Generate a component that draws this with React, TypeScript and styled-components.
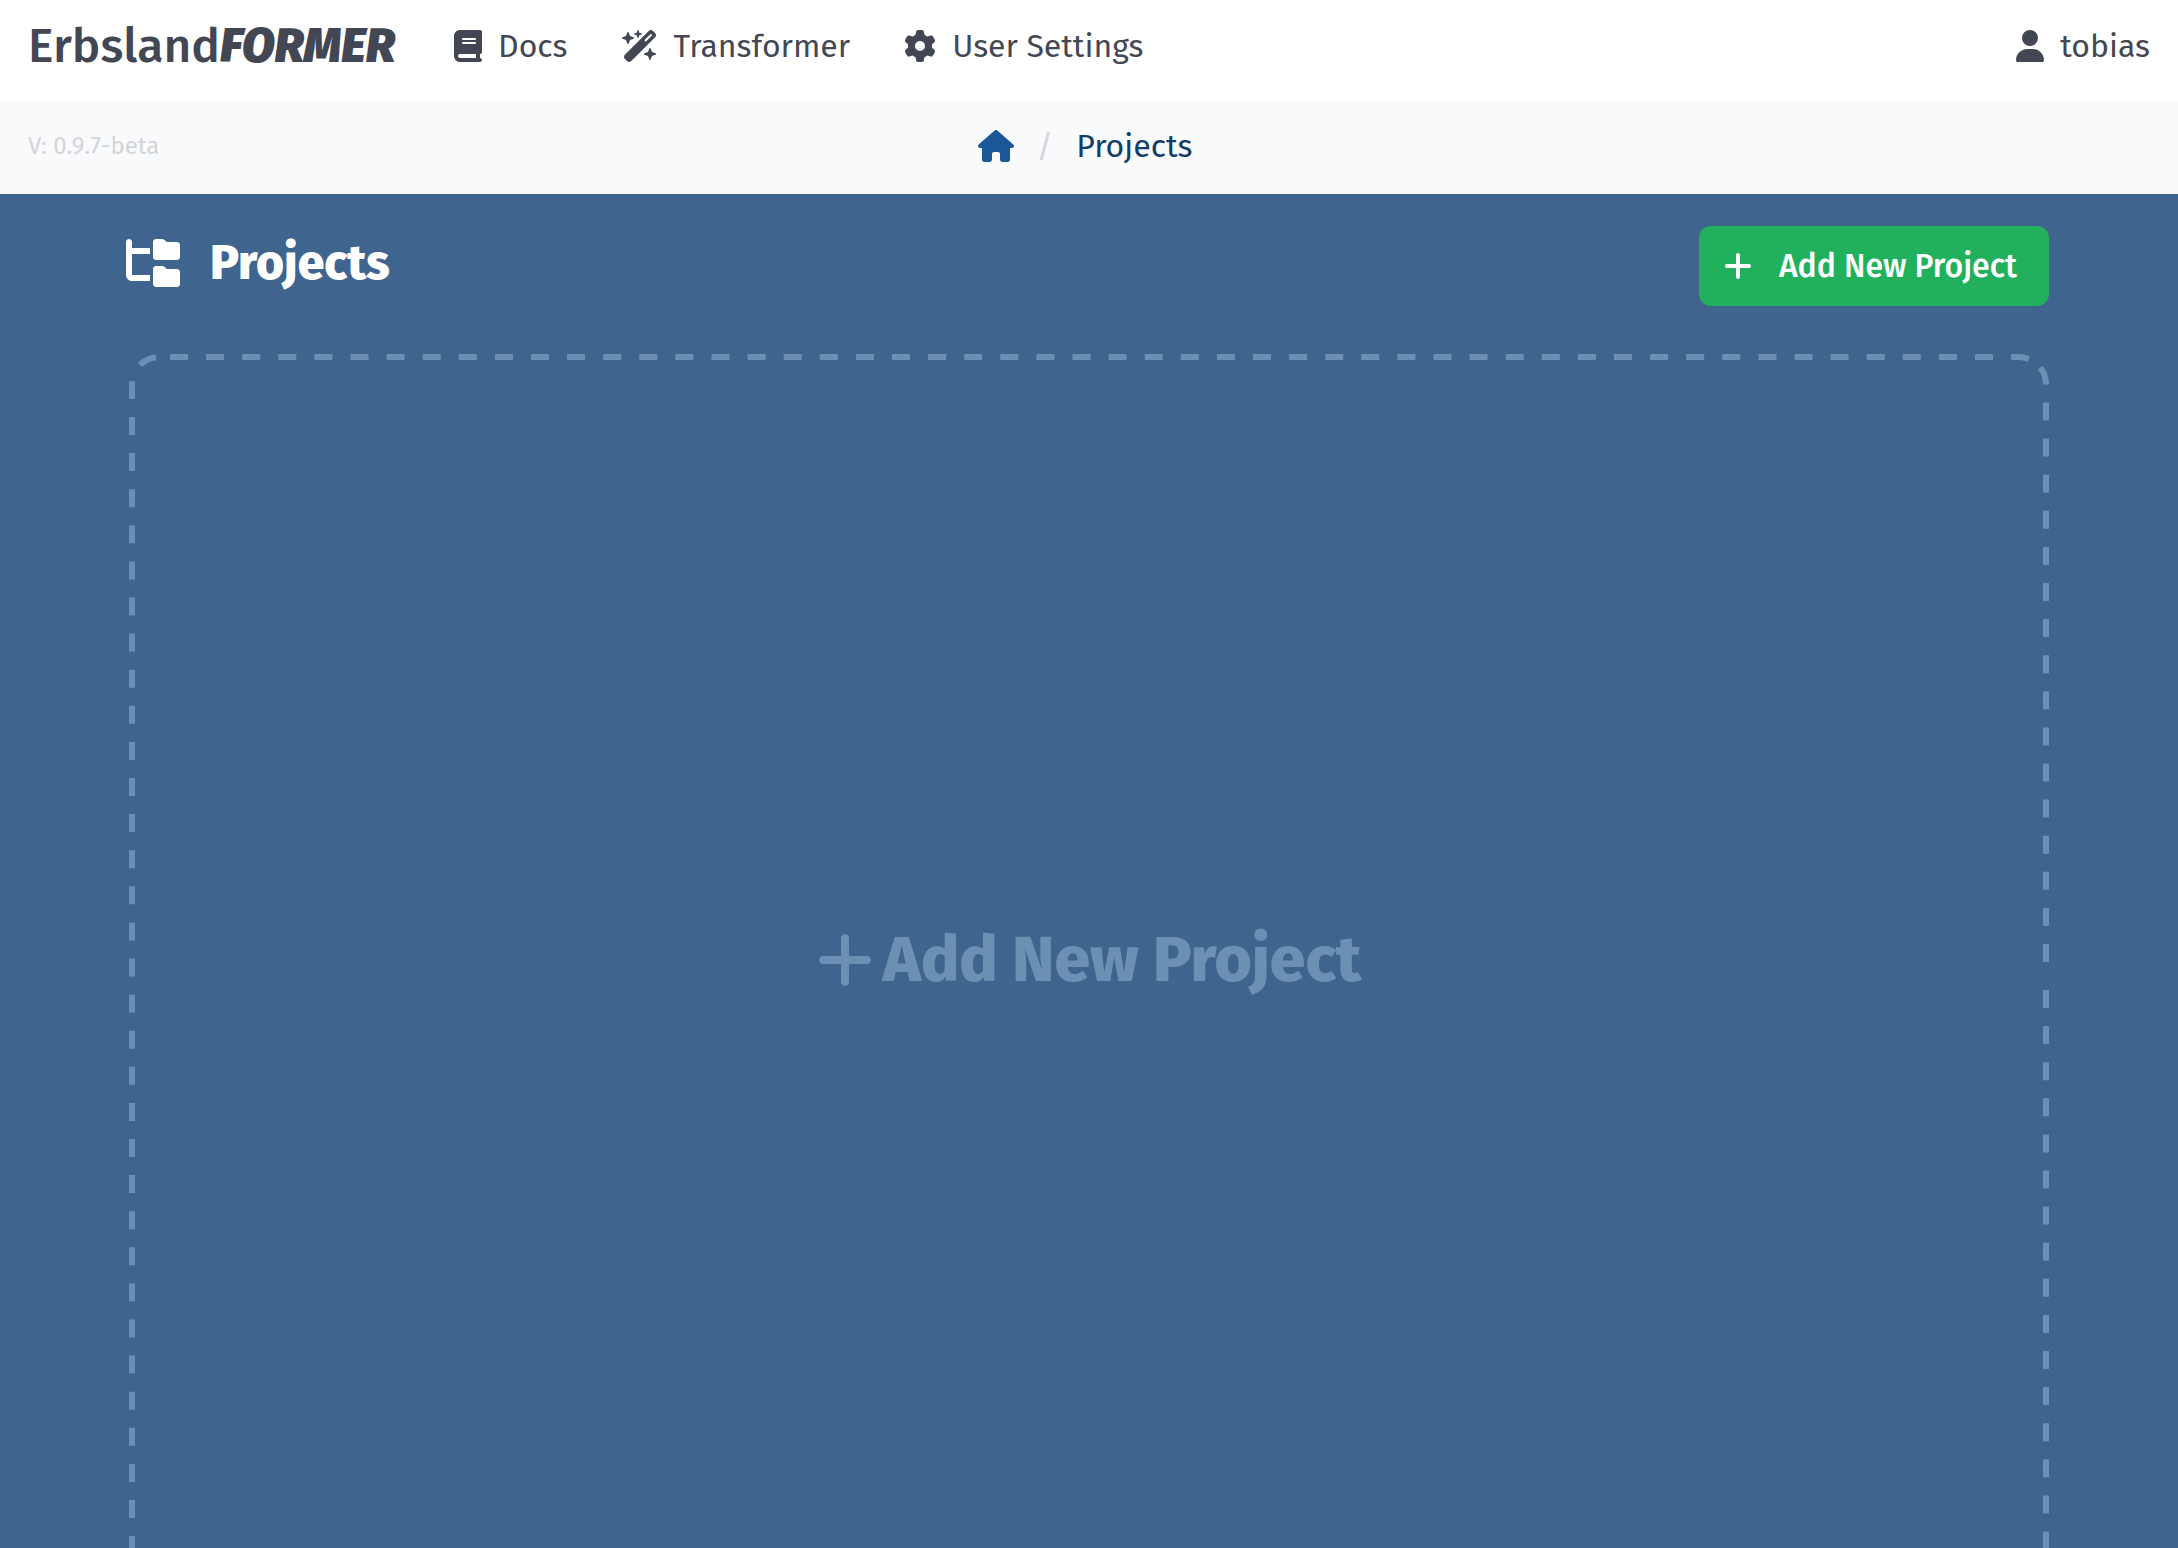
import React, { useLayoutEffect, useRef, useState } from "react";
import styled, { createGlobalStyle } from "styled-components";
import {
  FaBook,
  FaFolderTree,
  FaGear,
  FaHouse,
  FaPlus,
  FaUser,
  FaWandMagicSparkles,
} from "react-icons/fa6";

const ink = "#434753";
const blue = "#3f658f";
const faded = "#6b90b3";

const GlobalStyle = createGlobalStyle`
  *, *::before, *::after { box-sizing: border-box; }
  body {
    margin: 0;
    background: ${blue};
    color: ${ink};
    font-family: "Fira Sans", "Noto Sans", sans-serif;
    font-size: 32px;
    line-height: 40px;
  }
  a { color: inherit; text-decoration: none; }
`;

const Page = styled.div`
  display: flex;
  flex-direction: column;
  height: 100vh;
  overflow: hidden;
`;

const Glyph = styled.span<{ $width: number; $height?: number }>`
  flex: none;
  display: block;
  width: ${(p) => p.$width}px;
  height: ${(p) => p.$height ?? 32}px;

  svg {
    display: block;
    width: 100%;
    height: 100%;
  }
`;

const TopBar = styled.header`
  flex: none;
  display: flex;
  align-items: center;
  justify-content: space-between;
  height: 100px;
  padding: 0 28px 8px;
  background: #ffffff;
`;

const TopLeft = styled.div`
  display: flex;
  align-items: center;
  gap: 59px;
`;

const Logo = styled.a`
  font-size: 48px;
  font-weight: 500;
  line-height: 60px;
  white-space: nowrap;

  em {
    font-weight: 900;
  }
`;

const Nav = styled.nav`
  display: flex;
  gap: 54px;
`;

const NavLink = styled.a`
  display: flex;
  align-items: center;
  gap: 16px;
  white-space: nowrap;
`;

const SubBar = styled.div`
  flex: none;
  display: grid;
  grid-template-columns: 1fr auto 1fr;
  align-items: center;
  height: 94px;
  padding: 0 28px 2px;
  background: #f9fafc;
`;

const Version = styled.span`
  color: #d3d5d8;
  font-size: 24px;
`;

const Crumbs = styled.nav`
  display: flex;
  align-items: center;
  gap: 23px;
  padding-right: 8px;
  color: #123d68;

  ${Glyph} {
    color: #1a5796;
  }
`;

const Slash = styled.span`
  color: #d3d5d8;
`;

const Main = styled.main`
  flex: none;
  width: 100%;
  max-width: 1976px;
  margin: 0 auto;
  padding: 32px 28px;
`;

const TitleRow = styled.div`
  display: flex;
  align-items: center;
  justify-content: space-between;
  height: 80px;
  margin-bottom: 48px;
`;

const Title = styled.h1`
  display: flex;
  align-items: center;
  gap: 30px;
  margin: 0 0 6px -3px;
  color: #ffffff;
  font-size: 48px;
  font-weight: 800;
  line-height: 64px;
`;

const AddButton = styled.button`
  display: flex;
  align-items: center;
  gap: 27px;
  height: 80px;
  padding: 0 32px 0 25px;
  border: 0;
  border-radius: 12px;
  background: #21b15c;
  color: #ffffff;
  font: inherit;
  font-weight: 500;
  white-space: nowrap;
  cursor: pointer;
`;

const DropArea = styled.button`
  position: relative;
  display: flex;
  align-items: center;
  justify-content: center;
  gap: 10px;
  width: 100%;
  height: calc(100vh - 312px);
  padding: 0 0 24px;
  border: 0;
  background: transparent;
  color: ${faded};
  font: inherit;
  font-size: 64px;
  font-weight: 800;
  cursor: pointer;
`;

const Frame = styled.svg`
  position: absolute;
  inset: 0;
  width: 100%;
  height: 100%;
  fill: none;
  stroke: ${faded};
  stroke-width: 6;
  stroke-dasharray: 18 18.1;
`;

/* Rounded dashed outline: the dash pattern restarts at each side and at the middle of the right edge. */
function DashedFrame() {
  const ref = useRef<SVGSVGElement>(null);
  const [size, setSize] = useState({ w: 0, h: 0 });

  useLayoutEffect(() => {
    const el = ref.current;
    if (!el) return;
    const measure = () => {
      const box = el.getBoundingClientRect();
      setSize({ w: box.width, h: box.height });
    };
    measure();
    const observer = new ResizeObserver(measure);
    observer.observe(el);
    return () => observer.disconnect();
  }, []);

  const { w, h } = size;
  const mid = h / 2 - 12;

  return (
    <Frame ref={ref} aria-hidden="true">
      {w > 0 && (
        <>
          <path d={`M41 3 H${w - 30} A27 27 0 0 1 ${w - 11} 11`} />
          <path d={`M${w - 3} ${mid + 2} V30 A27 27 0 0 0 ${w - 11} 11`} />
          <path d={`M${w - 3} ${mid + 30} V${h - 30} A27 27 0 0 1 ${w - 30} ${h - 3} H30`} />
          <path d="M3 45 V30 A27 27 0 0 1 30 3" />
          <path d={`M3 63 V${h - 30} A27 27 0 0 0 30 ${h - 3}`} />
        </>
      )}
    </Frame>
  );
}

export default function App() {
  return (
    <Page>
      <GlobalStyle />
      <TopBar>
        <TopLeft>
          <Logo href="#">
            Erbsland<em>FORMER</em>
          </Logo>
          <Nav aria-label="Main">
            <NavLink href="#docs">
              <Glyph $width={28}>
                <FaBook />
              </Glyph>
              Docs
            </NavLink>
            <NavLink href="#transformer">
              <Glyph $width={36}>
                <FaWandMagicSparkles />
              </Glyph>
              Transformer
            </NavLink>
            <NavLink href="#settings">
              <Glyph $width={32}>
                <FaGear />
              </Glyph>
              User Settings
            </NavLink>
          </Nav>
        </TopLeft>
        <NavLink href="#account">
          <Glyph $width={28}>
            <FaUser />
          </Glyph>
          tobias
        </NavLink>
      </TopBar>
      <SubBar>
        <Version>V: 0.9.7-beta</Version>
        <Crumbs aria-label="Breadcrumb">
          <a href="#home" aria-label="Home">
            <Glyph $width={36}>
              <FaHouse />
            </Glyph>
          </a>
          <Slash>/</Slash>
          <a href="#projects">Projects</a>
        </Crumbs>
      </SubBar>
      <Main>
        <TitleRow>
          <Title>
            <Glyph $width={54} $height={48}>
              <FaFolderTree />
            </Glyph>
            Projects
          </Title>
          <AddButton type="button">
            <Glyph $width={28}>
              <FaPlus />
            </Glyph>
            Add New Project
          </AddButton>
        </TitleRow>
        <DropArea type="button">
          <DashedFrame />
          <Glyph $width={56} $height={64}>
            <FaPlus />
          </Glyph>
          Add New Project
        </DropArea>
      </Main>
    </Page>
  );
}
